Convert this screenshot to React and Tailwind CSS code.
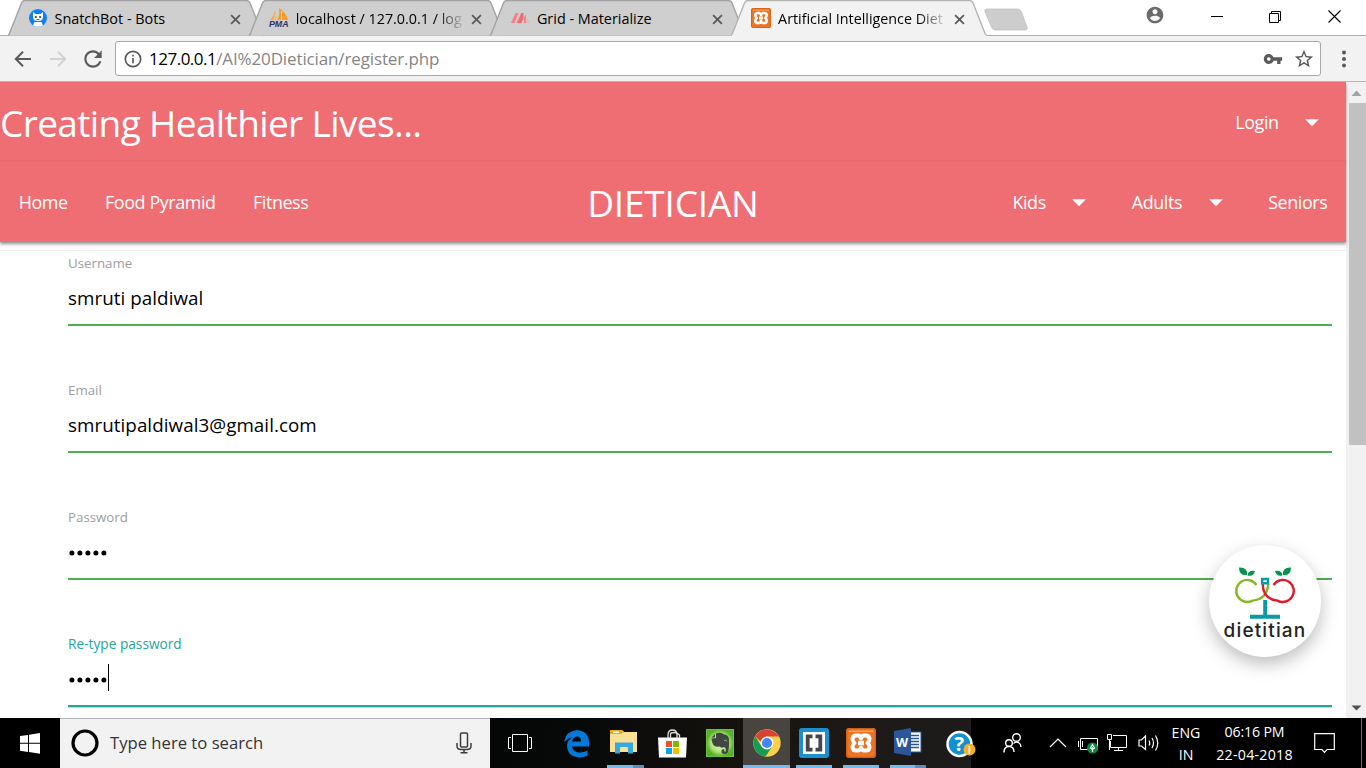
import React from 'react';

const tabs = [
  { title: 'SnatchBot - Bots', icon: 'bot', size: 'text-[14.4px]' },
  { title: 'localhost / 127.0.0.1 / log', icon: 'pma', size: 'text-[14.35px]', fade: true },
  { title: 'Grid - Materialize', icon: 'mat', size: 'text-[14.4px]' },
  { title: 'Artificial Intelligence Diet', icon: 'xampp', size: 'text-[14.3px]', fade: true, active: true },
];

function XamppIcon({ size }) {
  return (
    <svg width={size} height={size} viewBox="0 0 30 30">
      <rect width="30" height="30" rx="3" fill="#ee7423" />
      <rect x=".7" y=".7" width="28.6" height="28.6" rx="3" fill="none" stroke="#cc6016" strokeWidth="1.200" />
      <path d="M3 3.200H27" stroke="#ffb27a" strokeWidth="1.200" />
      <path
        d="M12.500 7.500H10.500Q6.500 7.500 6.500 11Q6.500 13.500 8.500 15Q6.500 16.500 6.500 19Q6.500 22.500 10.500 22.500H12Q14 22.500 15 19.500Q16 22.500 18 22.500H19.500Q23.500 22.500 23.500 19Q23.500 16.500 21.500 15Q23.500 13.500 23.500 11Q23.500 7.500 19.500 7.500H18Q16 7.500 15 10.500Q14 7.500 12.500 7.500Z"
        fill="none"
        stroke="#fff"
        strokeWidth="4"
        strokeLinejoin="round"
      />
      <path d="M12 15H18" stroke="#fff" strokeWidth="4.500" />
    </svg>
  );
}

function Favicon({ kind }) {
  if (kind === 'bot')
    return (
      <svg width="20" height="20" viewBox="0 0 20 20">
        <circle cx="10" cy="10" r="9" fill="#0b80fb" />
        <path d="M5 4L7.500 6H12.500L15 4L15 9.500Q14.500 13 10 13Q5.500 13 5 9.500Z" fill="#fff" />
        <path d="M6.500 14H13.500L15 17.200A9 9 0 0 1 5 17.200Z" fill="#fff" />
        <circle cx="7.900" cy="9" r="1.100" fill="#3a4450" />
        <circle cx="12.100" cy="9" r="1.100" fill="#3a4450" />
        <path d="M8.500 11.500H11.500" stroke="#566" strokeWidth="1" />
      </svg>
    );
  if (kind === 'pma')
    return (
      <svg width="20" height="20" viewBox="0 0 20 20">
        <path d="M1 12Q5 8 6 2Q8 7 7 12Z" fill="#f9a94a" />
        <path d="M8 12Q11 8 10 0Q17 4 19 12Z" fill="#f89c2a" />
        <path d="M12.500 12V3M5 12L6.500 6" stroke="#fdd29b" strokeWidth="1" />
        <text x="0" y="19.300" fontFamily="Liberation Sans" fontStyle="italic" fontWeight="bold" fontSize="8.800" fill="#2d2f67">PMA</text>
      </svg>
    );
  if (kind === 'mat')
    return (
      <svg width="20" height="20" viewBox="0 0 20 20">
        <path d="M1 15L5.500 5H8.500L4.500 15Z" fill="#f57f87" />
        <path d="M6.500 15L11 5H13.500V10L11.500 15Z" fill="#ee6e73" />
        <path d="M8.500 5H11L8 13Z" fill="#f9b2b6" />
        <path d="M14 15V10L16 6L15.800 15Z" fill="#f57f87" />
        <circle cx="17.500" cy="13.800" r="1.400" fill="#f9a5aa" />
      </svg>
    );
  return <XamppIcon size={20} />;
}

function Tab({ tab }) {
  return (
    <div className={`relative h-9 w-64 shrink-0 ${tab.active ? 'z-10' : ''}`}>
      <svg className="absolute inset-0" width="256" height="36" viewBox="0 0 256 36">
        <path
          d="M0 35.500L1 34.500L13.500 3Q14.500 .500 17 .500H238.500Q241 .500 242 3L254.500 34.500L256 35.500"
          fill={tab.active ? '#f2f2f2' : '#cfcfcf'}
          stroke={tab.active ? '#b4b4b4' : '#a3a3a3'}
          strokeWidth="1.400"
        />
        {tab.active && <path d="M1 35.500H255" stroke="#f2f2f2" strokeWidth="1.500" />}
      </svg>
      <div className="relative flex h-9 items-center pl-5">
        <Favicon kind={tab.icon} />
        <div
          className={`ml-[7px] mt-0.5 w-[168px] whitespace-nowrap leading-6 text-black ${tab.size} ${
            tab.fade ? '[mask-image:linear-gradient(to_right,#000_140px,transparent_170px)]' : ''
          }`}
        >
          {tab.title}
        </div>
        <svg className="ml-[7.5px] mt-0.5 shrink-0" width="11" height="11" viewBox="0 0 10 10">
          <path d="M1 1L9 9M9 1L1 9" stroke="#5a5a5a" strokeWidth="1.600" />
        </svg>
      </div>
    </div>
  );
}

function TabStrip() {
  return (
    <div className="flex h-9 shrink-0 border-b border-[#b0b0b0] bg-white pl-[7.5px]">
      <div className="flex h-9 -space-x-[14.8px]">
        {tabs.map((t) => (
          <Tab key={t.title} tab={t} />
        ))}
      </div>
      <svg className="-ml-[4px] mt-2" width="46" height="24" viewBox="0 0 46 24">
        <path d="M4 1H34Q37 1 38 3L44 19Q45 22 42 22H13Q10 22 9 20L2 4Q1 1 4 1Z" fill="#cdcdcd" stroke="#c0c0c0" strokeWidth=".8" />
      </svg>
      <div className="flex flex-1 items-start justify-end pr-[25px]">
        <svg className="mt-[5px]" width="20" height="20" viewBox="0 0 24 24">
          <path fill="#6b6b6b" d="M12 2C6.480 2 2 6.480 2 12s4.480 10 10 10 10-4.480 10-10S17.520 2 12 2zm0 3c1.660 0 3 1.340 3 3s-1.340 3-3 3-3-1.340-3-3 1.340-3 3-3zm0 14.200c-2.500 0-4.710-1.280-6-3.220.030-1.990 4-3.080 6-3.080 1.990 0 5.970 1.090 6 3.080-1.290 1.940-3.500 3.220-6 3.220z" />
        </svg>
        <svg className="ml-[46px] mt-[10px]" width="12" height="13" viewBox="0 0 12 13">
          <path d="M0 6.500H12" stroke="#000" />
        </svg>
        <svg className="ml-[46px] mt-[10px]" width="13" height="13" viewBox="0 0 13 13" fill="none" stroke="#000">
          <path d="M.500 3.500H9.500V12.500H.500ZM2.500 3.500V1.500H11.500V10.500H9.500" />
        </svg>
        <svg className="ml-[46px] mt-[10px]" width="13" height="13" viewBox="0 0 13 13">
          <path d="M.500 .500L12.500 12.500M12.500 .500L.500 12.500" stroke="#000" strokeWidth="1.100" />
        </svg>
      </div>
    </div>
  );
}

function Toolbar() {
  return (
    <div className="flex h-[46px] shrink-0 items-center border-b border-[#b6b4b6] bg-[#f2f2f2] pl-[11px]">
      <svg width="24" height="24" viewBox="0 0 24 24" fill="none" stroke="#5a5a5a" strokeWidth="2">
        <path d="M20 12H5M12 4.800L4.800 12L12 19.200" />
      </svg>
      <svg className="ml-[11px]" width="24" height="24" viewBox="0 0 24 24" fill="none" stroke="#d2d2d2" strokeWidth="2">
        <path d="M4 12H19M12 4.800L19.200 12L12 19.200" />
      </svg>
      <svg className="ml-[10px]" width="26" height="26" viewBox="0 0 24 24" fill="#5a5a5a">
        <path d="M17.650 6.350C16.200 4.900 14.210 4 12 4c-4.420 0-7.990 3.580-7.990 8s3.570 8 7.990 8c3.730 0 6.840-2.550 7.730-6h-2.080c-.820 2.330-3.040 4-5.650 4-3.310 0-6-2.690-6-6s2.690-6 6-6c1.660 0 3.140.690 4.220 1.780L13 11h7V4l-2.350 2.350z" />
      </svg>
      <div className="ml-[9px] flex h-[35px] w-[1206px] items-center rounded-[3px] border border-[#a8a8a8] bg-white pl-[7px] pr-[5px]">
        <svg width="20" height="20" viewBox="0 0 20 20" fill="none" stroke="#5a5a5a" strokeWidth="1.700">
          <circle cx="10" cy="10" r="7.700" />
          <path d="M10 9V14.200M10 5.800V7.600" />
        </svg>
        <div className="ml-1.5 flex flex-1 items-baseline whitespace-nowrap leading-6">
          <span className="text-[17px] tracking-[-0.5px] text-black">127.0.0.1</span>
          <span className="text-[17px] tracking-[-0.13px] text-[#858585]">/AI%20Dietician/register.php</span>
        </div>
        <svg width="20" height="20" viewBox="0 0 24 24" fill="#5a5a5a">
          <path d="M12.650 10C11.700 7.310 8.900 5.500 5.770 6.120 3.480 6.580 1.620 8.410 1.140 10.700.320 14.570 3.260 18 7 18c2.610 0 4.830-1.670 5.650-4H17v4h4v-4h2v-4H12.650zM7 14.200c-1.200 0-2.200-1-2.200-2.200s1-2.200 2.200-2.200 2.200 1 2.200 2.200-1 2.200-2.200 2.200z" />
        </svg>
        <svg className="ml-2.5" width="22" height="22" viewBox="0 0 24 24" fill="#5a5a5a">
          <path d="M22 9.240l-7.190-.620L12 2 9.190 8.630 2 9.240l5.460 4.730L5.820 21 12 17.270 18.180 21l-1.630-7.030L22 9.240zM12 15.400l-3.760 2.270 1-4.280-3.320-2.880 4.380-.380L12 6.100l1.710 4.040 4.380.380-3.320 2.880 1 4.280L12 15.400z" />
        </svg>
      </div>
      <svg className="ml-[20px]" width="6" height="18" viewBox="0 0 6 18" fill="#5a5a5a">
        <circle cx="3" cy="2.500" r="2" />
        <circle cx="3" cy="9" r="2" />
        <circle cx="3" cy="15.500" r="2" />
      </svg>
    </div>
  );
}

function NavLink({ children, arrow }) {
  return (
    <div className="flex items-center px-[18.7px]">
      <span>{children}</span>
      {arrow && (
        <svg className="-mt-px ml-[18.7px]" width="30" height="30" viewBox="0 0 24 24" fill="#fff">
          <path d="M6.500 9.700H17.500L12 15.300z" />
        </svg>
      )}
    </div>
  );
}

function Field({ label, active, children }) {
  return (
    <div className="flex h-[127px] shrink-0 flex-col">
      <div className={`h-6 leading-6 ${active ? 'text-[13.7px] text-[#26a69a]' : 'text-[13.300px] text-[#9e9e9e]'}`}>{label}</div>
      <div className="flex h-[46px] items-center text-[18.8px] tracking-[0.06px] text-black">{children}</div>
      <div className={`mt-[3px] h-[2px] shrink-0 ${active ? '-mt-[-2px] bg-[#26a69a] shadow-[0_1px_0_#b5dfdb]' : 'bg-[#4caf50]'}`} />
    </div>
  );
}

function Dots() {
  return (
    <svg className="mt-px" width="40" height="10" viewBox="0 0 40 10">
      {[3.900, 11.900, 19.900, 27.900, 35.900].map((x) => (
        <circle key={x} cx={x} cy="5" r="2.500" />
      ))}
    </svg>
  );
}

function DietitianBadge() {
  return (
    <div className="absolute left-[1209px] top-[462.5px] flex h-28 w-28 flex-col items-center overflow-hidden rounded-full bg-white shadow-[0_7px_18px_rgba(0,0,0,0.26)]">
      <svg className="shrink-0" width="112" height="75" viewBox="0 0 112 75" fill="none">
        <path d="M47.500 40A11 11 0 1 0 43.500 55.600Q58.500 54 59.200 39" stroke="#80bb27" strokeWidth="2.400" />
        <path d="M64.500 40A11 11 0 1 1 68.500 55.600Q53.500 54 53.800 39" stroke="#e01b2b" strokeWidth="2.400" />
        <path d="M53.200 34H59V38.200H53.200Z" stroke="#0a9aa5" strokeWidth="2.400" />
        <path d="M56.200 55V70M41 71.700H71" stroke="#0a9aa5" strokeWidth="4" />
        <g fill="#07944c">
          <path d="M30 22.500Q39 22 38 30Q30 31 30 22.500ZM46 26Q39 25 38.500 30.500Q44.500 32 46 26Z" />
          <path d="M82 22.500Q73 22 74 30Q82 31 82 22.500ZM66 26Q73 25 73.500 30.500Q67.500 32 66 26Z" />
        </g>
      </svg>
      <div className="-mt-px shrink-0 font-['Inter'] text-[19px] font-medium leading-[24px] tracking-[1.15px] text-[#222]">dietitian</div>
    </div>
  );
}

function Page() {
  return (
    <div className="relative flex h-[636px] shrink-0 overflow-hidden bg-white">
      <div className="flex w-[1346px] flex-col">
        <div className="relative z-[1] shrink-0 text-[17.900px] tracking-[-0.4px] text-white shadow-[0_2px_3px_rgba(0,0,0,0.42)]">
          <div className="flex h-20 items-center justify-between border-b-2 border-[#e96a6f] bg-[#ef6e73]">
            <span className="whitespace-nowrap pt-[3px] text-[37px] tracking-[-0.62px]">Creating Healthier Lives...</span>
            <div className="flex pt-[3px]">
              <NavLink arrow>Login</NavLink>
            </div>
          </div>
          <div className="grid h-20 grid-cols-[1fr_auto_1fr] items-center bg-[#ef6e73]">
            <div className="flex pt-px">
              <NavLink>Home</NavLink>
              <NavLink>Food Pyramid</NavLink>
              <NavLink>Fitness</NavLink>
            </div>
            <span className="pt-0.5 text-[37px] tracking-[-0.2px]">DIETICIAN</span>
            <div className="flex justify-end pt-px">
              <NavLink arrow>Kids</NavLink>
              <NavLink arrow>Adults</NavLink>
              <NavLink>Seniors</NavLink>
            </div>
          </div>
        </div>
        <div className="h-2 shrink-0 bg-[#fdfdfd]" />
        <div className="flex flex-col border-t border-[#f1f1f1] pl-[68px] pr-[14px]">
          <Field label="Username">smruti paldiwal</Field>
          <Field label="Email">smrutipaldiwal3@gmail.com</Field>
          <Field label="Password"><Dots /></Field>
          <Field label="Re-type password" active>
            <Dots />
            <span className="-mt-1 h-[27px] w-px bg-black" />
          </Field>
        </div>
      </div>
      <div className="flex w-5 flex-col items-center bg-[#f1f1f1]">
        <svg className="shrink-0" width="20" height="21" viewBox="0 0 20 21">
          <path d="M5.500 14H15.500L10.500 8.500Z" fill="#a3a3a3" />
        </svg>
        <div className="ml-0.5 h-[342px] w-[17px] shrink-0 bg-[#c1c1c1]" />
        <svg className="mt-auto shrink-0" width="20" height="20" viewBox="0 0 20 20">
          <path d="M5.500 7.500H15.500L10.500 12.500Z" fill="#505050" />
        </svg>
      </div>
      <DietitianBadge />
    </div>
  );
}

function TaskbarApp({ children, cls = '', bar = '' }) {
  return (
    <div className={`flex h-[50px] w-[47px] shrink-0 flex-col items-center ${cls}`}>
      <div className="flex h-[47px] w-full shrink-0 items-center justify-center pt-1">{children}</div>
      <div className={`h-[3px] shrink-0 ${bar}`} />
    </div>
  );
}

function Taskbar() {
  return (
    <div className="flex h-[50px] shrink-0 bg-black text-white">
      <div className="flex w-[60px] items-center justify-center">
        <svg width="20" height="21" viewBox="0 0 20 21" fill="#fff">
          <path d="M0 3L8 1.900V9.800H0ZM9 1.700L20 0V9.800H9ZM0 10.800H8V18.900L0 17.800ZM9 10.800H20V20.700L9 19.100Z" />
        </svg>
      </div>
      <div className="flex w-[430px] items-center border-t border-[#b5b5b5] bg-[#f2f2f2] pl-[11px] pr-[17px]">
        <svg className="-mt-px" width="28" height="28" viewBox="0 0 28 28">
          <circle cx="14" cy="14" r="12" fill="none" stroke="#000" strokeWidth="3.200" />
        </svg>
        <span className="ml-[11px] flex-1 text-[16.65px] text-[#333]">Type here to search</span>
        <svg className="-mt-px" width="18" height="22" viewBox="0 0 18 22" fill="none" stroke="#3c3c3c" strokeWidth="1.500">
          <rect x="5.500" y="1" width="7" height="14" rx="1" />
          <path d="M2 11V14Q2 17.500 6 17.500H12Q16 17.500 16 14V11M9 17.500V20.500M5.500 20.700H12.500" />
        </svg>
      </div>
      <div className="flex w-[481px] bg-[linear-gradient(100deg,#050606_0%,#080909_22%,#15120e_50%,#1c1916_75%,#1d1c1b_100%)]">
        <div className="flex w-[63px] shrink-0 items-center justify-center pr-[3px]">
          <svg width="24" height="20" viewBox="0 0 24 20" fill="none" stroke="#fff">
            <path d="M4.500 1.500H19.500V18.500H4.500ZM3 4.500H.500V15.500H3M21 4.500H23.500V15.500H21" />
          </svg>
        </div>
        <TaskbarApp cls="mr-0.5">
          <svg width="25" height="28" viewBox="0 0 25 28">
            <path d="M0 12Q2 1 13 0Q25 1 25 13V16.500H8Q9 22.500 16 22.500Q20 22.500 23.500 20.500V25.500Q19 28 14 27.500Q3 26 3 16Q3 10 9 7Q4 8 0 12ZM8.200 11.500H17Q17 6.500 12.800 6.500Q9 7 8.200 11.500Z" fill="#0478d7" fillRule="evenodd" />
          </svg>
        </TaskbarApp>
        <TaskbarApp bar="w-[37px] bg-[linear-gradient(90deg,#76b9ed_70%,#5c8eb7_70%)]">
          <svg className="-mt-1 -ml-1" width="28" height="24" viewBox="0 0 28 24">
            <path d="M0 22V1Q0 0 1 0H12L14 2H27V22Z" fill="#f9e092" />
            <path d="M0 4V0H12L14 2L11 4Z" fill="#e8ab1c" />
            <path d="M3 1.500H9V3H3Z" fill="#fff" />
            <path d="M5 23.500V12.500H23V23.500H18V18Q18 17 17 17H11Q10 17 10 18V23.500Z" fill="#35a8e0" />
          </svg>
        </TaskbarApp>
        <TaskbarApp>
          <svg width="29" height="29" viewBox="0 0 29 29">
            <path d="M0 8.500H29L28 28.500H1Z" fill="#fff" />
            <path d="M10 9V6Q10 1 14.500 1T19 6V9M12.500 9V5Q13 3.500 16 3.500T21.500 6V9" fill="none" stroke="#ddd" strokeWidth="1.300" />
            <path d="M8 12H14V18H8Z" fill="#f25022" />
            <path d="M15 12H21V18H15Z" fill="#7fba00" />
            <path d="M8 19H14V25H8Z" fill="#00a4ef" />
            <path d="M15 19H21V25H15Z" fill="#ffb900" />
          </svg>
        </TaskbarApp>
        <TaskbarApp>
          <svg className="-mt-0.5" width="28" height="28" viewBox="0 0 28 28">
            <defs>
              <radialGradient id="ever">
                <stop offset="0" stopColor="#e2f9bf" />
                <stop offset=".65" stopColor="#b4e582" />
                <stop offset="1" stopColor="#55b02a" />
              </radialGradient>
            </defs>
            <rect x=".5" y=".5" width="27" height="27" fill="url(#ever)" stroke="#6cc038" />
            <path d="M5.500 9.500L10 9V4.500Q12 3.500 15.500 4L18.500 5.500Q22.500 6 23 10Q23.500 18 22 23Q21 25.500 18 25Q15 24.500 15.500 21.500Q16.500 19.500 18.500 20.500L18 22.500L19.800 22.500Q20.500 19 18 18Q15.500 19.500 13.500 17.500Q9 18.500 7 15.500Q5.500 12 5.500 9.500Z" fill="#414642" />
            <path d="M5.500 8.500L9 5V8.500Z" fill="#414642" />
            <path d="M18 11.500Q20 10 20.800 12.500" stroke="#8bc45c" fill="none" />
          </svg>
        </TaskbarApp>
        <TaskbarApp cls="bg-[#484540]" bar="w-full bg-[#76b9ed]">
          <svg className="-mt-0.5" width="28" height="28" viewBox="0 0 28 28">
            <circle cx="14" cy="14" r="13.700" fill="#fcd04b" />
            <path d="M2.200 7.200A13.700 13.700 0 0 1 25.900 7.500H14Q9 8 8 13Z" fill="#d94235" />
            <path d="M2.200 7.200A13.700 13.700 0 0 0 12.500 27.600L19.300 17.500Q14 22.500 8.500 17.500Z" fill="#189c55" />
            <circle cx="14" cy="14" r="6.500" fill="#fff" />
            <circle cx="14" cy="14" r="5.100" fill="#4587f3" />
          </svg>
        </TaskbarApp>
        <TaskbarApp bar="w-9 bg-[#76b9ed]">
          <svg className="-mt-0.5" width="30" height="30" viewBox="0 0 30 30">
            <rect width="30" height="30" rx="3" fill="#1c8fd0" />
            <rect x="4" y="4" width="22" height="22" fill="#fff" />
            <path d="M13.500 8.300H8.700V21.700H13.500M16.500 8.300H21.300V21.700H16.500" fill="none" stroke="#464646" strokeWidth="3.800" />
          </svg>
        </TaskbarApp>
        <TaskbarApp bar="w-9 bg-[#76b9ed]">
          <div className="-mt-0.5">
            <XamppIcon size={30} />
          </div>
        </TaskbarApp>
        <TaskbarApp bar="w-9 bg-[linear-gradient(90deg,#76b9ed_70%,#5c8eb7_70%)]">
          <svg className="-mt-1" width="28" height="28" viewBox="0 0 28 28">
            <rect x="13" y="4" width="14" height="20" fill="#fff" stroke="#2b579a" />
            <path d="M16 7.500H25M16 10.500H25M16 13.500H25M16 16.500H25M16 19.500H25" stroke="#2b579a" strokeWidth="1.300" />
            <path d="M0 3L17 0V28L0 25Z" fill="#2b579a" />
            <text x="2" y="18.500" fontFamily="Open Sans" fontWeight="bold" fontSize="12.500" fill="#fff">W</text>
          </svg>
        </TaskbarApp>
        <TaskbarApp cls="relative pl-[12px]">
          <svg className="shrink-0" width="30" height="28" viewBox="0 0 30 28">
            <circle cx="13.500" cy="14" r="12" fill="#1191d0" stroke="#fff" strokeWidth="2.500" />
            <text x="8.500" y="21" fontFamily="Open Sans" fontWeight="bold" fontSize="20" fill="#fff">?</text>
            <circle cx="23.500" cy="19.500" r="6" fill="#f8af20" />
            <text x="21.800" y="23.500" fontFamily="Open Sans" fontWeight="bold" fontSize="11" fill="#fff">i</text>
          </svg>
        </TaskbarApp>
      </div>
      <div className="flex flex-1 items-center pl-[31px]">
        <svg width="22" height="22" viewBox="0 0 22 22" fill="none" stroke="#fff" strokeWidth="1.400">
          <circle cx="14.500" cy="5.500" r="3.800" />
          <circle cx="7" cy="11" r="3.300" />
          <path d="M2 20.500Q2 14.500 7 14.500T12 20M11.500 11.500Q14 9.500 16.500 10.500Q19 12 19 15" />
        </svg>
        <svg className="ml-[25px]" width="18" height="10" viewBox="0 0 18 10" fill="none" stroke="#fff" strokeWidth="1.200">
          <path d="M1 9L9 1L17 9" />
        </svg>
        <svg className="ml-[11px] mt-1" width="20" height="18" viewBox="0 0 20 18" fill="none" stroke="#fff">
          <path d="M2.500 2.500H19.500V13.500H2.500ZM.500 5V11M4.500 5V11" />
          <circle cx="14.500" cy="12" r="5.500" fill="#10893e" stroke="none" />
          <path d="M14.500 8.500L12.500 12L14.500 13.500L16.500 12ZM14.500 11V16" strokeWidth="1.100" />
        </svg>
        <svg className="ml-2" width="22" height="18" viewBox="0 0 22 18" fill="none" stroke="#fff">
          <path d="M7 1.500H20.500V13.500H4.500V7M1.500 .500H5.500V5.500H1.500ZM3.500 5.500V16M12.500 13.500V16.500M8 16.500H17" />
        </svg>
        <svg className="ml-[10px]" width="22" height="18" viewBox="0 0 22 18" fill="none" stroke="#fff" strokeWidth="1.200">
          <path d="M1 6H3.500L7.500 2V15.500L3.500 12H1ZM11 6.500Q12.500 9 11 11.500M14 4Q17 9 14 14M17.500 1.500Q22 9 17.500 16.500" />
        </svg>
        <div className="ml-2 flex h-full w-[36px] flex-col items-center pt-[4px] text-[14.200px] leading-[22px]">
          <span>ENG</span>
          <span>IN</span>
        </div>
        <div className="ml-2 flex h-full w-[85px] flex-col items-center whitespace-nowrap pt-[2px] text-[14.200px] leading-[23px]">
          <span className="tracking-[-0.15px]">06:16 PM</span>
          <span className="tracking-[0.25px]">22-04-2018</span>
        </div>
        <svg className="ml-[17px]" width="21" height="21" viewBox="0 0 21 21" fill="none" stroke="#fff" strokeWidth="1.200">
          <path d="M.700 .700H20.300V16.500H13L10.500 19.300L8 16.500H.700Z" />
        </svg>
        <div className="ml-auto mr-1 h-full w-px bg-[#6a6a6a]" />
      </div>
    </div>
  );
}

export default function App() {
  return (
    <div className="flex h-[768px] w-[1366px] flex-col overflow-hidden bg-white font-['Open_Sans','Noto_Sans',sans-serif]">
      <TabStrip />
      <Toolbar />
      <Page />
      <Taskbar />
    </div>
  );
}
